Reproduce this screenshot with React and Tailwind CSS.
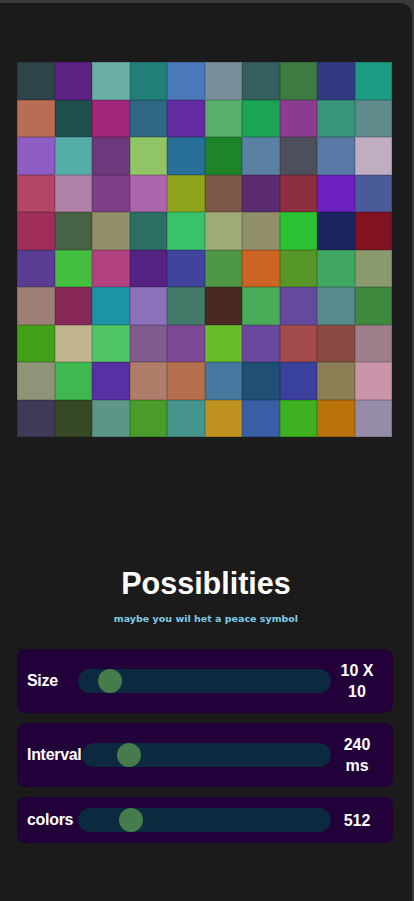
import React from 'react';

const colors = [
  ['#2f4449', '#5e2184', '#6aaea4', '#217f79', '#4a78bb', '#7b8e9c', '#355f60', '#3d7b42', '#343a82', '#1d9c84'],
  ['#b96d55', '#204f4f', '#a02779', '#2e6784', '#642ca0', '#5aae6c', '#1ba455', '#8b3c8f', '#37957a', '#5f8b8b'],
  ['#8e5dc4', '#55ada8', '#6f387d', '#91c467', '#276f98', '#1d8428', '#5a80a2', '#4d4f5c', '#5878a5', '#c0adc1'],
  ['#b24664', '#b183a8', '#7e3f89', '#ac66ad', '#8fa41b', '#7c5646', '#5a2b70', '#8b2f41', '#6e20bf', '#4b5a98'],
  ['#a12d5a', '#476244', '#938e6c', '#2a6e64', '#38c36b', '#a0ab7a', '#929068', '#2bc233', '#1c2560', '#811222'],
  ['#5a3c93', '#44be3f', '#b24180', '#542283', '#41449c', '#4e9744', '#cd6423', '#579728', '#40a862', '#8b9a6e'],
  ['#9d7f76', '#872859', '#1d93a6', '#8c71bb', '#427b6a', '#482a22', '#49ab58', '#644a9d', '#578a8c', '#41883f'],
  ['#42a118', '#c1b58d', '#50c566', '#7f5b8e', '#7e4994', '#68bd28', '#6a489d', '#a14c4a', '#8a4a42', '#9f7e8b'],
  ['#8f9478', '#3fb852', '#5730a3', '#b07d6a', '#b5704d', '#44789f', '#1f4f74', '#3a419c', '#8c7f56', '#ca94ab'],
  ['#403a58', '#374924', '#5b9688', '#4a9c2a', '#46958c', '#bf9220', '#3a5ea5', '#3eb121', '#bb720b', '#968ca8'],
];

function Control({ label, value, offset }) {
  return (
    <div className="w-[376px] flex items-center bg-[#220039] rounded-[8px] pl-[10px] pr-[10px] py-[11px]">
      <span className="min-w-[51px] text-[16px] font-bold text-white tracking-[-0.3px]">{label}</span>
      <div className="flex-1 h-[24px] rounded-full bg-[#0c2940] flex items-center">
        <div className="w-[24px] h-[24px] rounded-full bg-[#467c4b]" style={{ marginLeft: offset }} />
      </div>
      <span className="w-[52px] text-center text-[16px] leading-[21px] font-bold text-white">{value}</span>
    </div>
  );
}

export default function App() {
  return (
    <div className="min-h-screen bg-[#393939] pt-[3px] pr-[2px] font-['Liberation_Sans',Arial,sans-serif]">
      <div className="h-[898px] bg-[#1b1b1b] rounded-tr-[12px] px-[17px] pt-[59px]">
        {/* grid of colors */}
        <div className="grid grid-cols-10 w-[375px] h-[375px]">
          {colors.flat().map((c, i) => (
            <div key={i} className="border border-black/15" style={{ backgroundColor: c }} />
          ))}
        </div>

        <h1 className="mt-[128px] text-center text-[30.5px] leading-[36px] font-bold text-white">Possiblities</h1>
        <p className="mt-[11px] text-center text-[9.5px] leading-[14px] font-bold text-[#7ecbe6] font-['DejaVu_Sans',Verdana,sans-serif]">
          maybe you wil het a peace symbol
        </p>

        <div className="mt-[23px] flex flex-col gap-[10px]">
          <Control label="Size" value={<>10 X<br />10</>} offset={20} />
          <Control label="Interval" value={<>240<br />ms</>} offset={35} />
          <Control label="colors" value="512" offset={41} />
        </div>
      </div>
    </div>
  );
}
